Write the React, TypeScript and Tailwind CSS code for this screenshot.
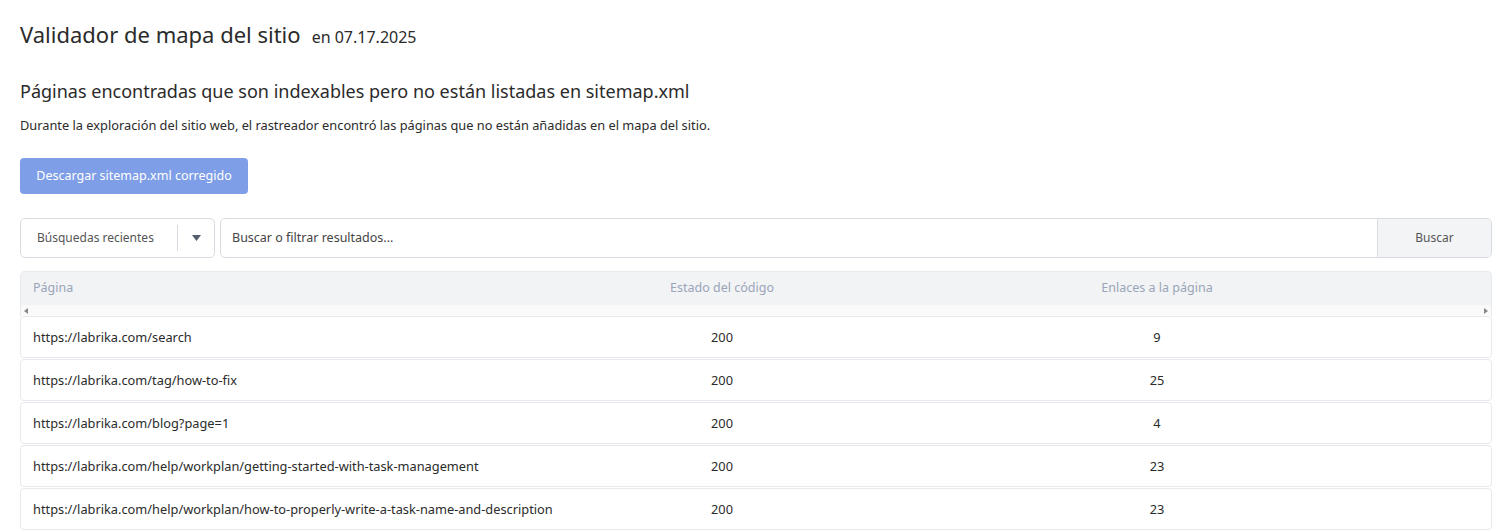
const rows = [
  { url: "https://labrika.com/search", code: 200, links: 9 },
  { url: "https://labrika.com/tag/how-to-fix", code: 200, links: 25 },
  { url: "https://labrika.com/blog?page=1", code: 200, links: 4 },
  { url: "https://labrika.com/help/workplan/getting-started-with-task-management", code: 200, links: 23 },
  { url: "https://labrika.com/help/workplan/how-to-properly-write-a-task-name-and-description", code: 200, links: 23 },
]

export default function App() {
  return (
    <div className="h-screen overflow-hidden bg-white pl-5 pr-[11px] pt-[18px] text-[#2b2b2b] font-['Noto_Sans',sans-serif]">
      <div className="flex items-baseline gap-[11px]">
        <h1 className="text-[22px]">Validador de mapa del sitio</h1>
        <span className="text-[16px]">en 07.17.2025</span>
      </div>

      <h2 className="mt-[27px] text-[18px]">
        Páginas encontradas que son indexables pero no están listadas en sitemap.xml
      </h2>
      <p className="mt-[11px] text-[12.8px]">
        Durante la exploración del sitio web, el rastreador encontró las páginas que no están añadidas en el mapa del sitio.
      </p>

      <button className="mt-[23px] h-9 w-[228px] rounded-[4px] bg-[#7e9ee7] text-[12.5px] text-white">
        Descargar sitemap.xml corregido
      </button>

      <div className="mt-6 flex h-10 gap-[5px]">
        <div className="flex w-[195px] items-center rounded-[5px] border border-[#d8dbe2]">
          <span className="flex-1 pl-4 text-[12px] text-[#555]">Búsquedas recientes</span>
          <span className="h-[26px] w-px bg-[#d8dbe2]" />
          <span className="flex w-9 justify-center">
            <svg width="9" height="6" viewBox="0 0 9 6"><path d="M0 0h9L4.5 6z" fill="#555c6b" /></svg>
          </span>
        </div>
        <div className="flex flex-1 overflow-hidden rounded-[5px] border border-[#d8dbe2]">
          <div className="flex flex-1 items-center pl-[11px] text-[12.5px] text-[#444]">Buscar o filtrar resultados...</div>
          <div className="flex w-[114px] items-center justify-center border-l border-[#d8dbe2] bg-[#f3f4f6] text-[12px] text-[#555]">
            Buscar
          </div>
        </div>
      </div>

      <div className="mt-[13px] overflow-hidden rounded-t-[5px] border border-b-0 border-[#e6e9ee]">
        <div className="grid h-[33px] grid-cols-[600px_202px_1fr] items-center bg-[#f2f3f5] text-[12.5px] text-[#9aa5b8]">
          <span className="pl-3">Página</span>
          <span className="text-center">Estado del código</span>
          <span className="text-center">Enlaces a la página</span>
        </div>
        <div className="flex h-[11px] items-center justify-between bg-[#fafafa] px-[3px]">
          <svg width="4" height="6" viewBox="0 0 4 6"><path d="M4 0v6L0 3z" fill="#888" /></svg>
          <svg width="4" height="6" viewBox="0 0 4 6"><path d="M0 0v6l4-3z" fill="#888" /></svg>
        </div>
      </div>

      <div className="flex flex-col gap-px">
        {rows.map((r) => (
          <div
            key={r.url}
            className="grid h-[42px] grid-cols-[600px_202px_1fr] items-center rounded-[4px] border border-[#e6e9ee] text-[12.8px]"
          >
            <span className="pl-3">{r.url}</span>
            <span className="text-center">{r.code}</span>
            <span className="text-center">{r.links}</span>
          </div>
        ))}
      </div>
    </div>
  )
}
